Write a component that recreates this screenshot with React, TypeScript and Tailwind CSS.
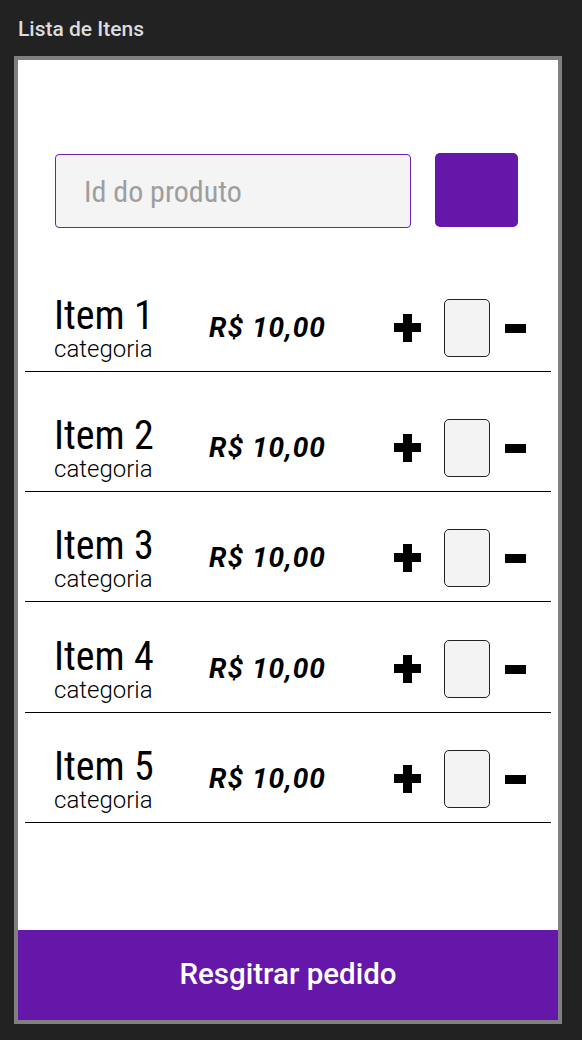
import React from 'react';

const items = [
  { name: 'Item 1', h: 'h-[110px]' },
  { name: 'Item 2', h: 'h-[120px]' },
  { name: 'Item 3', h: 'h-[110px]' },
  { name: 'Item 4', h: 'h-[111px]' },
  { name: 'Item 5', h: 'h-[110px]' },
];

function Plus() {
  return (
    <div className="relative w-[27px] h-[28px]">
      <div className="absolute left-0 top-[9px] w-[27px] h-[9px] bg-black" />
      <div className="absolute left-[9px] top-0 w-[9px] h-[28px] bg-black" />
    </div>
  );
}

export default function App() {
  return (
    <div className="w-[582px] h-[1040px] bg-[#222222] font-['Roboto',sans-serif] overflow-hidden">
      <div className="h-[56px] pl-[18px] pt-[19px]">
        <h1 className="text-[21px] leading-[21px] font-medium text-[#dcdcdc]">Lista de Itens</h1>
      </div>

      <div className="ml-[14px] w-[548px] h-[968px] border-4 border-[#808080] bg-white flex flex-col">
        <div className="flex items-start pl-[37px] pt-[93px]">
          <input
            placeholder="Id do produto"
            className="mt-[1px] w-[356px] h-[74px] rounded-[4px] border border-[#6a1fb0] bg-[#f4f4f4] pl-[28px] text-[30px] [font-stretch:75%] text-black placeholder:text-[#9e9e9e] outline-none"
          />
          <button className="ml-[24px] w-[83px] h-[74px] rounded-[5px] bg-[#6517a9]" />
        </div>

        <div className="mt-[34px] px-[7px]">
          {items.map((item) => (
            <div key={item.name} className={`${item.h} border-b border-black flex items-end pb-[14px]`}>
              <div className="flex items-center h-[58px] w-full">
                <div className="pl-[29px] w-[184px] shrink-0">
                  <div className="text-[40px] leading-[40px] [font-stretch:75%] text-black">{item.name}</div>
                  <div className="mt-[1px] text-[24px] leading-[24px] font-light text-black">categoria</div>
                </div>
                <div className="w-[185px] shrink-0 text-[28px] tracking-[1px] font-bold italic text-black">R$ 10,00</div>
                <Plus />
                <div className="ml-[23px] w-[46px] h-[58px] rounded-[5px] border border-[#222] bg-[#f3f3f3]" />
                <div className="ml-[15px] w-[21px] h-[9px] bg-black" />
              </div>
            </div>
          ))}
        </div>

        <button className="mt-auto h-[90px] pb-[2px] bg-[#6517a9] text-white text-[29.5px] font-medium flex items-center justify-center">
          Resgitrar pedido
        </button>
      </div>
    </div>
  );
}
